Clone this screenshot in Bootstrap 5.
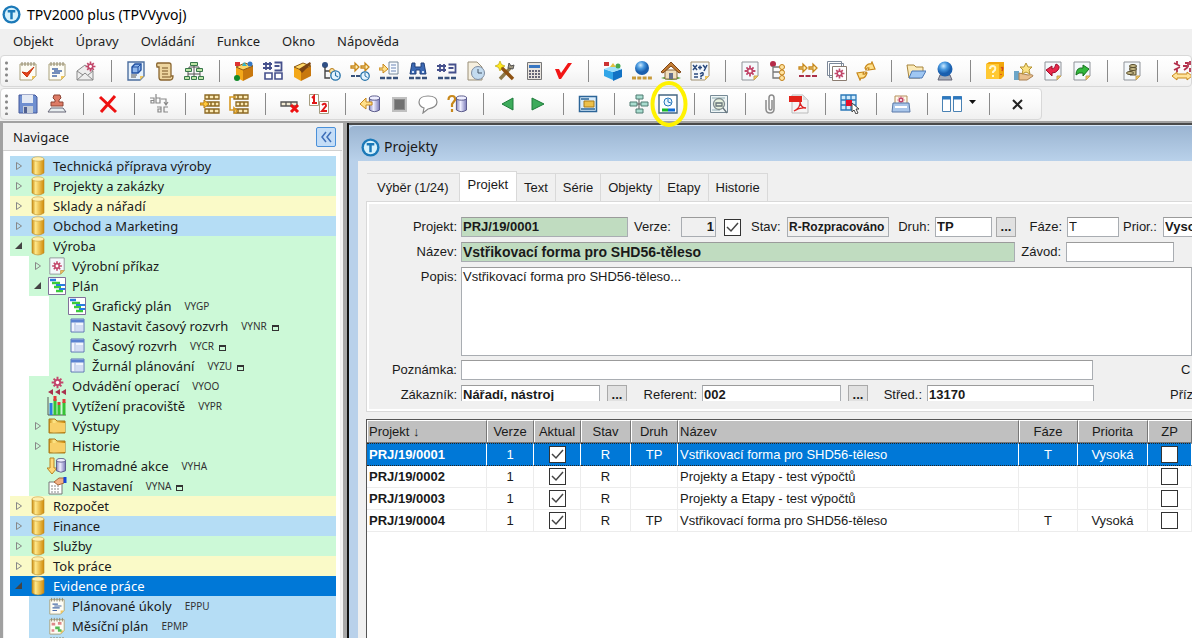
<!DOCTYPE html>
<html lang="cs">
<head>
<meta charset="utf-8">
<meta name="viewport" content="width=device-width, initial-scale=1">
<title>TPV2000 plus (TPVVyvoj)</title>
<link href="https://cdn.jsdelivr.net/npm/bootstrap@5.3.0/dist/css/bootstrap.min.css" rel="stylesheet">
<script src="https://cdn.jsdelivr.net/npm/bootstrap@5.3.0/dist/js/bootstrap.bundle.min.js"></script>
<style>
  body { font-family: "Noto Sans", "DejaVu Sans Condensed", sans-serif; font-size: 13px; line-height: 20px; color: #1a1a1a; background: #f0f0f0; }
  button, input, textarea { font: inherit; color: inherit; border-radius: 0; }
  svg { display: block; flex: none; }
  .app-title { height: 29px; padding-left: 2px; gap: 6px; font-size: 14px; line-height: 28px; color: #000; }
  .app-menu { height: 26px; padding-left: 13px; gap: 22px; line-height: 24px; }
  .app-menu a { color: #1e1e1e; text-decoration: none; }
  .tool-strip { height: 32px; border: 1px solid #d8d8d8; border-radius: 4px; background: linear-gradient(#fff, #fafafa 50%, #f0f0f0); margin-bottom: 1px; }
  .tool-strip button { width: 29px; height: 30px; padding: 0 0 0 4px; border: 0; background: none; flex: none; position: relative; }
  .tool-strip button.drop-tool { width: 40px; }
  .grip { width: 13px; height: 22px; flex: none; background: radial-gradient(circle, #888 1px, transparent 2px) 3px 0 / 5px 6px repeat-y; }
  .tool-sep { width: 21px; height: 22px; flex: none; background: linear-gradient(#8a8a8a, #8a8a8a) center / 1px 22px no-repeat; }
  .strip-low .tool-sep { width: 22px; }
  .marker { position: absolute; left: -5px; top: -9px; z-index: 5; pointer-events: none; }
  .dock { border-top: 2px solid #a2a2a2; }
  .nav-side { width: 349px; border-left: 3px solid #a0a0a0; border-right: 2px solid #111; background: #f0f0f0; flex: none; box-shadow: inset -4px 0 #a8a8a8, inset -6px 0 #f4f4f4; }
  .nav-head { height: 28px; padding-left: 10px; padding-right: 6px; margin-right: 5px; border-bottom: 1px solid #d0d0d0; }
  .nav-head button { width: 20px; height: 20px; padding: 0 3px; border: 1px solid #4a90d9; border-radius: 2px; background: #c4ddf7; }
  .tree { background: #fff; margin: 0 7px 0 1px; padding: 5px 4px 0 6px; }
  .tree li { height: 20px; white-space: nowrap; }
  .tree .lv1 { margin-left: 19px; } .tree .lv2 { margin-left: 39px; }
  .tree .twist { width: 18px; flex: none; display: flex; justify-content: center; }
  .tree .label { margin-left: 5px; }
  .tree small { margin-left: 13px; font-size: 10px; line-height: 20px; color: #333; }
  .tree .sq { width: 7px; height: 6px; border: 1px solid #333; border-top-width: 2px; margin: 4px 0 0 5px; }
  .c-b { background: #b5ddf5; } .c-g { background: #ccf9d7; } .c-y { background: #fafac8; }
  .c-s { background: #0078d7; color: #fff; }
  .doc { border-top: 2px solid #4a4a4a; padding-left: 9px; background: linear-gradient(#b9d1ea, #b9d1ea) 0 0 / 9px 100% no-repeat #f0f0f0; font-family: "Liberation Sans", Arial, sans-serif; }
  .doc-title { height: 36px; margin-left: -9px; padding: 7px 0 0 12px; background: linear-gradient(#9ab4d1, #b9d1ea); border-top: 1px solid #d8e8f8; border-top-left-radius: 5px; font-family: "Noto Sans", sans-serif; font-size: 14px; }
  .doc-tabs { margin: 10px 0 0 9px; height: 30px; align-items: flex-end; }
  .doc-tabs button { height: 28px; border: 1px solid #d9d9d9; border-left: 0; border-bottom: 0; background: #f0f0f0; padding: 0 7px; white-space: nowrap; flex: none; }
  .doc-tabs button:first-child { padding: 0 10px; }
  .doc-tabs button.active { height: 30px; background: #fff; padding: 0 8px 4px; }
  .pane { margin-left: 8px; height: 211px; padding: 11px 0 6px 2px; border: solid #d9d9d9; border-width: 1px 0 1px 1px; box-shadow: inset 2px 2px #fff, inset 0 -2px #fff; }
  .frow { height: 20px; margin-bottom: 5px; white-space: nowrap; }
  .frow > * { flex: none; }
  .first-lb { width: 88px; text-align: right; margin-right: 4px; }
  .pane input[type=text], .pane textarea { height: 20px; border: 1px solid #a9adb2; border-top-color: #9b9b9b; background: #fff; padding: 0 1px; font-weight: 700; outline: 0; }
  .pane input.grn { background: #c0dcc0; }
  .pane input.gry { background: #f0f0f0; }
  .frow button { width: 20px; height: 20px; border: 1px solid #a9a9a9; background: #e1e1e1; padding: 0; line-height: 18px; font-weight: 700; }
  .pane textarea.memo { height: 89px; font-weight: 400; line-height: 18px; resize: none; }
  .cut { height: 16px; overflow: hidden; }
  .tick { appearance: none; width: 17px; height: 17px; border: 1px solid #333; background: #fff; margin: 0; display: block; }
  .tick:checked { background: #fff url("data:image/svg+xml,%3Csvg xmlns='http://www.w3.org/2000/svg' viewBox='0 0 15 15'%3E%3Cpath d='M2 7l4 4 7-8' fill='none' stroke='%23444' stroke-width='1.5'/%3E%3C/svg%3E"); }
  .w-a { width: 167px; } .w-b { width: 35px; } .w-d { width: 57px; } .w-e { width: 52px; }
  .w-h { width: 108px; } .w-i { width: 632px; } .w-j { width: 139px; }
  .pane input.w-c { width: 102px; font-size: 12px; }
  .pane input.w-g { width: 554px; font-size: 14px; }
  .lb-b { width: 53px; padding-left: 6px; } .lb-c { width: 38px; padding-left: 2px; } .lb-d { width: 46px; text-align: right; padding-right: 5px; }
  .lb-e { width: 51px; text-align: right; padding-right: 5px; } .lb-f { width: 44px; padding-left: 4px; } .lb-g { width: 68px; text-align: right; padding-right: 5px; } .lb-h { width: 52px; text-align: right; padding-right: 5px; }
  .lb-x { margin-left: 88px; } .lb-y { margin-left: 76px; } .mx-6 { margin: 0 7px; }
  .grid-box { margin: 7px 0 0 8px; background: #fff; border: 1px solid #555; border-width: 1px 0 0 1px; }
  .grid-box table { width: 100%; table-layout: fixed; border-collapse: separate; border-spacing: 0; line-height: 20px; }
  .grid-box th { height: 23px; padding: 0 2px; background: #c0c0c0; font-weight: 400; text-align: center; border-right: 1px solid #777; border-bottom: 1px solid #777; border-top: 1px solid #fff; box-shadow: inset 1px 0 #fff; }
  .grid-box td { height: 22px; padding: 0 1px; border-right: 1px solid #ececec; border-bottom: 1px solid #ececec; text-align: center; white-space: nowrap; }
  .grid-box .tick { margin: 0 auto; }
  .grid-box .tl { text-align: left; padding-left: 2px; }
  .grid-box tbody .tl:first-child { font-weight: 700; }
  .grid-box .sel td { height: 23px; background: #0078d7; color: #fff; border-bottom: 1px dotted #222; border-top: 1px dotted #222; border-right-color: #fff; }
  .k-a { width: 120px; } .k-b { width: 47px; } .k-c { width: 50px; } .k-d { width: 59px; } .k-e { width: 70px; } .k-f { width: 44px; }
</style>
</head>
<body class="vh-100 overflow-hidden d-flex flex-column">

<svg width="0" height="0" class="position-absolute" aria-hidden="true">
  <defs>
    <linearGradient id="gold"><stop offset="0" stop-color="#c98a10"/><stop offset=".3" stop-color="#ffe88a"/><stop offset="1" stop-color="#d18b08"/></linearGradient>
    <linearGradient id="ice"><stop offset="0" stop-color="#8c8cc0"/><stop offset=".4" stop-color="#eef"/><stop offset="1" stop-color="#7a7ab8"/></linearGradient>
    <radialGradient id="ball" cx=".4" cy=".3"><stop offset="0" stop-color="#cdeaff"/><stop offset=".5" stop-color="#4a9ae0"/><stop offset="1" stop-color="#1a5fae"/></radialGradient>
  </defs>
  <symbol id="logo" viewBox="0 0 20 20"><circle cx="10" cy="10" r="9.500" fill="#1b79b8"/><circle cx="10" cy="10" r="7" fill="#d6f1fc"/><path d="M6 6.500h8M10 6.500V15" stroke="#1b79b8" stroke-width="2.600"/></symbol>
  <symbol id="note" viewBox="0 0 20 20"><path d="M2 3h16v12l-4 4H2z" fill="#fdfcf4" stroke="#a9a07a"/><path d="M14 19v-4h4z" fill="#f0c75e"/><path d="M4 1v4M7 1v4M10 1v4M13 1v4M16 1v4" stroke="#8d8466"/></symbol>
  <symbol id="notecheck" viewBox="0 0 20 20"><use href="#note"/><path d="M4 11l5 5 7-10-7 6z" fill="#e8451c" stroke="#c8330c"/></symbol>
  <symbol id="notelines" viewBox="0 0 20 20"><use href="#note"/><path d="M5 8h6M7 10h8M5 12h8M5 15h5" stroke="#476aa8" stroke-width="1.300"/></symbol>
  <symbol id="mail" viewBox="0 0 20 20"><path d="M1 10l8-6 8 6v9H1z" fill="#eee" stroke="#888"/><path d="M1 19l8-7 8 7M1 10l6 4M17 10l-5 4" fill="none" stroke="#888"/><use href="#gear" x="9" y="0" width="11" height="11"/></symbol>
  <symbol id="gear" viewBox="0 0 20 20"><path d="M10 1v18M1 10h18M4 4l12 12M16 4L4 16" stroke="#c2476b" stroke-width="3"/><circle cx="10" cy="10" r="5.500" fill="#c2476b"/><circle cx="10" cy="10" r="2.600" fill="#fff"/></symbol>
  <symbol id="paper" viewBox="0 0 20 20"><path d="M2 1h16v14l-4 4H2z" fill="#f4f8fb" stroke="#8f9399"/><path d="M14 19v-4h4z" fill="#f0c75e" stroke="#c9a455"/></symbol>
  <symbol id="cubepage" viewBox="0 0 20 20"><path d="M2 1h16v14l-4 4H2z" fill="#e6f1fb" stroke="#4d6f9f" stroke-width="1.400"/><path d="M14 19v-4h4z" fill="#f0c75e"/><path d="M6 6l3-3h6v6l-3 3H6z" fill="#8fb7ec" stroke="#1f4ea0" stroke-width="1.400"/><path d="M6 6h6v6M12 6l3-3" fill="none" stroke="#1f4ea0"/><path d="M5 14h6M5 16h5" stroke="#555"/></symbol>
  <symbol id="scroll" viewBox="0 0 20 20"><path d="M3 2h11q2 0 2 2v11h2q0 4-3 4H6q-2 0-2-3V6H2Q1 2 3 2z" fill="#eed6a0" stroke="#8a6630" stroke-width="1.300"/><path d="M7 7h6M7 10h6M7 13h6M7 16h9" stroke="#785525"/></symbol>
  <symbol id="org" viewBox="0 0 20 20"><path d="M10 4v12M5 8v-2h10v2M4 10v6M16 10v6M4 13h12" fill="none" stroke="#555"/><g fill="#bde5a6" stroke="#37764a"><path d="M6.500 1.500h7v3h-7zM1.500 7.500h6v3h-6zM12.500 7.500h6v3h-6zM.5 15.500h5v3h-5zM7.500 15.500h5v3h-5zM14.500 15.500h5v3h-5z"/></g></symbol>
  <symbol id="box" viewBox="0 0 20 20"><path d="M2 6l7 3v11l-7-4z" fill="#f3a81a"/><path d="M9 9l10-4v10L9 20z" fill="#c8780e"/><path d="M2 6l9-4 8 3-10 4z" fill="#ffd766" stroke="#8b5711"/></symbol>
  <symbol id="boxparts" viewBox="0 0 20 20"><use href="#box"/><path d="M1 1h5v4H1z" fill="#d33"/><path d="M8 5l2-4 3 4z" fill="#39b5c5"/><circle cx="16" cy="3" r="2.500" fill="#3578c4"/><circle cx="3" cy="17" r="3" fill="#128a28"/></symbol>
  <symbol id="boxpen" viewBox="0 0 20 20"><use href="#box"/><path d="M7 8l11-7 1 2-9 9z" fill="#7b4311"/></symbol>
  <symbol id="bluebox" viewBox="0 0 20 20"><path d="M1 8l9 3v8l-9-4z" fill="#32a6e8"/><path d="M10 11l9-3v8l-9 4z" fill="#1272c4"/><path d="M1 8l8-3 10 3-9 3z" fill="#9de0fb"/><path d="M1 1h5v4H1z" fill="#c33"/><path d="M7 6l3-4 3 4z" fill="#e0c040"/><circle cx="15" cy="5" r="2.500" fill="#46a94f"/></symbol>
  <symbol id="hash" viewBox="0 0 20 20"><path d="M3 1v8M7 1v8M0 3h9M0 7h9" stroke="#45508c" stroke-width="1.800"/><path d="M11.500 1.500h7v8h-7M11.500 5h5" fill="none" stroke="#45508c" stroke-width="1.800"/></symbol>
  <symbol id="hashboxes" viewBox="0 0 20 20"><use href="#hash"/><path d="M2 12h7v6H2zM12 12h7v6h-7z" fill="#fff" stroke="#45508c" stroke-width="1.600"/></symbol>
  <symbol id="hashdash" viewBox="0 0 20 20"><use href="#hash" y="2"/><use href="#dashes"/></symbol>
  <symbol id="dashes" viewBox="0 0 20 20"><path d="M1 17h18" stroke="#38527c" stroke-width="2.400" stroke-dasharray="5 1.500"/></symbol>
  <symbol id="clock" viewBox="0 0 20 20"><circle cx="10" cy="10" r="8.500" fill="#e4f3fd" stroke="#2672a8" stroke-width="2.500"/><path d="M10 4v6l5 3" fill="none" stroke="#2672a8" stroke-width="2"/></symbol>
  <symbol id="treeclock" viewBox="0 0 20 20"><circle cx="4" cy="4" r="3" fill="#2f4f84"/><path d="M4 6v11h5M4 10h5" fill="none" stroke="#444" stroke-width="1.400"/><circle cx="11" cy="10" r="2.500" fill="#fbe2a4" stroke="#b87d18"/><use href="#clock" x="9" y="9" width="11" height="11"/></symbol>
  <symbol id="arrows" viewBox="0 0 20 20"><path d="M1 5h4V2l4 4-4 4V7H1zM11 5h4V2l4 4-4 4V7h-4z" fill="#fff0b8" stroke="#c8881c" stroke-width="1.300"/></symbol>
  <symbol id="arrowsclock" viewBox="0 0 20 20"><use href="#arrows"/><path d="M1 15h9" stroke="#38527c" stroke-width="2" stroke-dasharray="4 1"/><use href="#clock" x="10" y="10" width="10" height="10"/></symbol>
  <symbol id="arrowpage" viewBox="0 0 20 20"><path d="M10 1h9v12h-9z" fill="#f7fbff" stroke="#789"/><path d="M12 4h5M12 7h5M12 10h5" stroke="#6a85b5"/><path d="M0 7h4V3l5 5-5 4V9H0z" fill="#ffe08a" stroke="#c8881c"/><use href="#dashes"/></symbol>
  <symbol id="bino" viewBox="0 0 20 20"><path d="M4 2h3v4h6V2h3l2 11h-6v-4H8v4H2z" fill="#3b69b3" stroke="#22417a"/><path d="M4 11h2M14 11h2" stroke="#cfe0f8" stroke-width="2"/><use href="#dashes"/></symbol>
  <symbol id="pageclock" viewBox="0 0 20 20"><path d="M2 1h9l5 5v13H2z" fill="#f5efdf" stroke="#9a8f78"/><circle cx="12" cy="12" r="6.500" fill="#c3dbef" stroke="#7c8ba0"/><path d="M12 8v4h4" fill="none" stroke="#456"/></symbol>
  <symbol id="tools" viewBox="0 0 20 20"><path d="M5 18L17 5" stroke="#8d7a4c" stroke-width="3.400"/><path d="M6 6l12 12" stroke="#8e5212" stroke-width="3.400"/><path d="M14 2l-1 5 5 1 1-4-3 1z" fill="#a39b85" stroke="#555"/><path d="M5 0l1.500 3.500L10 5 6.500 6.500 5 10 3.500 6.500 0 5l3.500-1.500z" fill="#ffe81e" stroke="#b09800" stroke-width=".6"/></symbol>
  <symbol id="calc" viewBox="0 0 20 20"><path d="M3.500 1.500h14v17h-14z" fill="#e8e4de" stroke="#777"/><path d="M5 4h11v3H5z" fill="#3876c2"/><path d="M5 10h11M5 13h11M5 16h11" stroke="#667" stroke-width="2" stroke-dasharray="2 1"/></symbol>
  <symbol id="redcheck" viewBox="0 0 20 20"><path d="M2 8h4l2 4L15 2h4L8 18H6z" fill="#f21616"/></symbol>
  <symbol id="globe" viewBox="0 0 20 20"><circle cx="10" cy="7" r="7" fill="url(#ball)"/><path d="M0 17h20" stroke="#c79a3a" stroke-width="3" stroke-dasharray="4 1.300"/></symbol>
  <symbol id="home" viewBox="0 0 20 20"><path d="M0 17q10-4 20 0-9 4-20 0" fill="#5da63c"/><path d="M4 9h12v9H4z" fill="#f0dfbd" stroke="#8b6b3c"/><path d="M0 11L10 1l10 10-2 1-8-7-8 7z" fill="#c27c34" stroke="#7d4515"/><path d="M8 12h4v6H8z" fill="#66708b"/></symbol>
  <symbol id="formula" viewBox="0 0 20 20"><path d="M1 1h18v14l-4 4H1z" fill="#f4f8fb" stroke="#a09070"/><path d="M15 19v-4h4z" fill="#f0c75e"/><path d="M3 4l4 5M7 4L3 9M8 6.500h4M10 4.500v4M13 4l2 2.500M17 4l-3 6M4 13h4M4 16h4M10 13q4-3 3 1l-2 1v1M11 16.500v1.500" fill="none" stroke="#2b4a7d" stroke-width="1.500"/></symbol>
  <symbol id="gearpage" viewBox="0 0 20 20"><use href="#paper"/><use href="#gear" x="4" y="4" width="12" height="12"/></symbol>
  <symbol id="treered" viewBox="0 0 20 20"><circle cx="4" cy="3" r="3" fill="#b52a48"/><path d="M4 5v12h7M4 11h7M4 6h8" fill="none" stroke="#777" stroke-width="1.300"/><g fill="#ffe3a0" stroke="#c17f18"><circle cx="13" cy="6" r="2.500"/><circle cx="13" cy="11.500" r="2.500"/><circle cx="13" cy="17" r="2.500"/></g></symbol>
  <symbol id="arrowsred" viewBox="0 0 20 20"><use href="#arrows" y="1"/><path d="M1 15h18" stroke="#aa2e48" stroke-width="2.200" stroke-dasharray="5 1.500"/></symbol>
  <symbol id="pages" viewBox="0 0 20 20"><path d="M.5.500h14v14H.5zM2.500 2.500h14v14h-14z" fill="#fff" stroke="#7c8898"/><path d="M5.500 5.500h14v14h-14z" fill="#fff" stroke="#8b7c70"/><use href="#gear" x="7" y="7" width="11" height="11"/></symbol>
  <symbol id="swap" viewBox="0 0 20 20"><path d="M9 7q2-5 6-4l1-2 3 7-7 1 1-2q-2-1-3 2zM11 12q-2 6-6 5l-1 2-3-7 7-1-1 2q2 1 3-2z" fill="#ffe08a" stroke="#c8881c" stroke-width="1.200"/></symbol>
  <symbol id="openfolder" viewBox="0 0 20 20"><path d="M1 4h7l2 2h7v4L14 17H3z" fill="#fbeab8" stroke="#a8853c"/><path d="M6 10h14l-4 7H3z" fill="#9fc7f3" stroke="#4b77b4"/></symbol>
  <symbol id="crystal" viewBox="0 0 20 20"><path d="M5 14h10l2 5H3z" fill="#a6acb8" stroke="#667"/><circle cx="10" cy="8" r="7.500" fill="url(#ball)"/></symbol>
  <symbol id="quest" viewBox="0 0 20 20"><path d="M1 3l3-2h15v14l-3 3H1z" fill="#f2a70c"/><path d="M1 3h13v15H1z" fill="#ffc933"/><path d="M5 8q0-3 3-3t2 4l-2 2v1M8 14v2" fill="none" stroke="#fff7d0" stroke-width="2"/><path d="M16 7q3-2 1 3M16 13v1" fill="none" stroke="#d04a20" stroke-width="1.500"/></symbol>
  <symbol id="handstar" viewBox="0 0 20 20"><path d="M0 10h5v9H0z" fill="#6ca5c8"/><path d="M5 12l9 2q5-1 5 1l-6 4H5z" fill="#e9c08e" stroke="#a98052"/><path d="M12 2l2 4h4l-3 3 1 4-4-2-4 2 1-4-3-3h4z" fill="#fbe285" stroke="#b59330"/></symbol>
  <symbol id="pgred" viewBox="0 0 20 20"><use href="#paper"/><path d="M3 9l6-4v3q3 0 4-5 5 2 2 6-2 3-6 3v3z" fill="#e8284b" stroke="#a00d2b"/></symbol>
  <symbol id="pggreen" viewBox="0 0 20 20"><use href="#paper"/><path d="M17 8l-6-4v3q-7-1-7 7l3-2h4v3z" fill="#32b83c" stroke="#14701c"/></symbol>
  <symbol id="coins" viewBox="0 0 20 20"><use href="#paper"/><g fill="#c9bc8a" stroke="#554b2b"><path d="M8 5h6v9H8z"/><ellipse cx="11" cy="5" rx="3.500" ry="1.500"/><ellipse cx="11" cy="8" rx="3.500" ry="1.500"/><ellipse cx="8" cy="12" rx="3.500" ry="1.500"/></g></symbol>
  <symbol id="gearswap" viewBox="0 0 20 20"><path d="M2 2l6 3M2 9l6-3M5 0v4M5 7v4M13 2h3v4M12 9l4-3M18 0v4M18 7v4M11 5h4" stroke="#b3304c" stroke-width="1.800" fill="none"/><path d="M0 15l5-4v2h10v-2l5 4-5 4v-2H5v2z" fill="#ffe39a" stroke="#c8881c"/></symbol>
  <symbol id="floppy" viewBox="0 0 20 20"><path d="M1 1h16l2 2v16H1z" fill="#6f8fd0" stroke="#44589a"/><path d="M4 1h11v8H4z" fill="#e4eaf4"/><path d="M5 12h10v7H5z" fill="#c4ccd8"/><path d="M6 13h3v6H6z" fill="#506090"/></symbol>
  <symbol id="stamp" viewBox="0 0 20 20"><path d="M7 1h6l1 3-2 2v2h4v4H4V8h4V6L6 4z" fill="#dd7b66" stroke="#8e4434"/><path d="M4 14h12l3 4H1z" fill="#e8eef0" stroke="#667"/></symbol>
  <symbol id="redx" viewBox="0 0 20 20"><path d="M2 3l16 15M17 2L3 18" stroke="#e11" stroke-width="3"/></symbol>
  <symbol id="replace" viewBox="0 0 20 20"><path d="M1 4h4v5H2V6.500h3M7 0v9h4V4H7M12 5h5v5M15 8l2 3 2-3M8 13h4v5H9v-3h3M19 13h-4v5h4" fill="none" stroke="#888" stroke-width="1.200"/></symbol>
  <symbol id="rows" viewBox="0 0 20 20"><path d="M5 1h14v4H5zM7 8h12v4H7zM5 15h14v4H5z" fill="#fbe9b4" stroke="#8c6823" stroke-width="1.300"/><path d="M9 1v4M14 1v4M11 8v4M15 8v4M9 15v4M14 15v4" stroke="#8c6823" stroke-width="1.500"/></symbol>
  <symbol id="rowins" viewBox="0 0 20 20"><use href="#rows"/><path d="M0 9h4V6l5 4-5 4v-3H0z" fill="#ffc93c" stroke="#b87b0c"/></symbol>
  <symbol id="rowcopy" viewBox="0 0 20 20"><use href="#rows"/><path d="M7 3H1v13h4v-2l3 3-3 3" fill="none" stroke="#d89a22" stroke-width="1.600"/></symbol>
  <symbol id="rowdel" viewBox="0 0 20 20"><path d="M1 8h16v4H1zM6 8v4M11 8v4" fill="#f2ead2" stroke="#555" stroke-width="1.300"/><path d="M11 11l7 7M18 11l-7 7" stroke="#e11" stroke-width="3"/></symbol>
  <symbol id="onetwo" viewBox="0 0 20 20"><path d="M.5.500h9v11h-9zM10.500 7.500h9v12h-9z" fill="#fff" stroke="#a69d80"/><path d="M3 4l2-2v7M3 9h5M13 11q4-3 4 1l-4 5h5" fill="none" stroke="#e01818" stroke-width="2"/></symbol>
  <symbol id="cyl" viewBox="0 0 20 20"><path d="M4 3v14q6 4 12 0V3z" fill="url(#ice)" stroke="#44447a"/><ellipse cx="10" cy="3" rx="6" ry="2.500" fill="#eef" stroke="#44447a"/></symbol>
  <symbol id="dbin" viewBox="0 0 20 20"><use href="#cyl" x="6" y="1" width="17" height="18"/><path d="M12 8H6V4L0 10l6 5v-4h6z" fill="#ffe08a" stroke="#c8881c"/></symbol>
  <symbol id="stop" viewBox="0 0 20 20"><path d="M4 4h13v13H4z" fill="#8a8a8a" stroke="#c0c0c0" stroke-width="2"/><path d="M6 6h9v9H6z" fill="#707070"/></symbol>
  <symbol id="bubble" viewBox="0 0 20 20"><path d="M10 2c5 0 9 2 9 6s-4 6-9 7l-5 4 1-5C3 13 1 11 1 8c0-4 4-6 9-6z" fill="#fff" stroke="#888" stroke-width="1.200"/></symbol>
  <symbol id="dbq" viewBox="0 0 20 20"><use href="#cyl" x="6" y="1" width="17" height="18"/><path d="M1.500 6q0-4 3.500-4t3 4l-3 4v3M5 15v3" fill="none" stroke="#c8881c" stroke-width="2.200"/></symbol>
  <symbol id="prev" viewBox="0 0 20 20"><path d="M15 4v12L4 10z" fill="#3dab5b" stroke="#1d7c3a"/></symbol>
  <symbol id="next" viewBox="0 0 20 20"><path d="M5 4v12l12-6z" fill="#3dab5b" stroke="#1d7c3a"/></symbol>
  <symbol id="panel" viewBox="0 0 20 20"><path d="M1.500 2.500h17v15h-17z" fill="#d9ecfb" stroke="#2c6598" stroke-width="1.500"/><path d="M3 5h8M3 15h14" stroke="#2c6598" stroke-width="1.500"/><path d="M6 7h10v6H6z" fill="#ecc04a" stroke="#a97a18"/></symbol>
  <symbol id="flow" viewBox="0 0 20 20"><path d="M10 3v14M3 10h14" stroke="#555"/><g fill="#a9ddd0" stroke="#4f7b70"><path d="M7 1h7v4H7zM1 8h7v4H1zM12 8h7v4h-7zM7 15h7v4H7z"/></g></symbol>
  <symbol id="clockbar" viewBox="0 0 20 20"><path d="M1 1h18v18H1z" fill="#fff" stroke="#446583" stroke-width="1.400"/><circle cx="10" cy="8" r="4" fill="#eaf5ff" stroke="#2776bb"/><path d="M10 5v3l3 1" fill="none" stroke="#2776bb"/><path d="M4 16h6" stroke="#19b82a" stroke-width="3"/><path d="M10 16h7" stroke="#0c69d8" stroke-width="3"/></symbol>
  <symbol id="find" viewBox="0 0 20 20"><path d="M1.500 1.500h17v17h-17z" fill="#eef5f5" stroke="#778a96"/><path d="M3 4h13M3 16h8" stroke="#90aeb5"/><circle cx="10" cy="10" r="5.500" fill="#e6f1dd" stroke="#7f8b8e" stroke-width="1.300"/><path d="M7 9h6v3H7zM14 14l4 5" fill="none" stroke="#66737a" stroke-width="1.300"/></symbol>
  <symbol id="clip" viewBox="0 0 20 20"><path d="M6 6v9q0 4 4 4t4-4V4q0-3-2.500-3T9 4v10q0 2 1.500 2T12 14V6" fill="none" stroke="#8b8b8b" stroke-width="1.500"/></symbol>
  <symbol id="pdf" viewBox="0 0 20 20"><path d="M3 1h11l5 5v13H3z" fill="#f5f5f5" stroke="#bbb"/><path d="M14 1v5h5z" fill="#ddd"/><path d="M0 2h13v6H0z" fill="#e2231a"/><path d="M5 17q7-4 6-9 1 6 6 6-6-1-12 3z" fill="none" stroke="#d22" stroke-width="1.300"/></symbol>
  <symbol id="gridpick" viewBox="0 0 20 20"><path d="M1 1h15v15H1z" fill="#cfeafb"/><path d="M1 1h15v15H1zM6 1v15M11 1v15M1 6h15M1 11h15" fill="none" stroke="#2b78b8" stroke-width="1.300"/><path d="M6 6h6v6H6z" fill="#e8102a"/><path d="M12 9v9l2-2 2 4 2-1-2-4h3z" fill="#fff" stroke="#444"/></symbol>
  <symbol id="tray" viewBox="0 0 20 20"><path d="M4 2h12v8H4z" fill="#fff8e8" stroke="#b58f5b"/><use href="#gear" x="6" y="2" width="8" height="8"/><path d="M2 9h16l1 9H1z" fill="#a9c6ea" stroke="#5a79a8"/><path d="M4 13h12" stroke="#fff" stroke-width="2"/></symbol>
  <symbol id="cols" viewBox="0 0 34 20"><path d="M.5 2.500h8v15h-8zM11.500 2.500h8v15h-8z" fill="#fff" stroke="#4a82b4"/><path d="M0 4h9M11 4h9" stroke="#2d79c0" stroke-width="3"/><path d="M27 6h7l-3.500 4z" fill="#111"/></symbol>
  <symbol id="close" viewBox="0 0 20 20"><path d="M5 6l9 9M14 6l-9 9" stroke="#222" stroke-width="2"/></symbol>
  <symbol id="db" viewBox="0 0 20 20"><path d="M4 3v14q6 4 12 0V3z" fill="url(#gold)" stroke="#b98a2a" stroke-width=".6"/><ellipse cx="10" cy="3" rx="6" ry="2.200" fill="#fff0b0" stroke="#c9a040" stroke-width=".6"/></symbol>
  <symbol id="gantt" viewBox="0 0 20 20"><path d="M1.500 1.500h17v17h-17z" fill="#fff" stroke="#81709a"/><path d="M3 4h6" stroke="#2a7de0" stroke-width="2.500"/><path d="M5 7h8M7 11h7M9 15h7" stroke="#3acb3a" stroke-width="2.500"/><path d="M9 9h9M12 13h6" stroke="#2a7de0" stroke-width="1.800"/></symbol>
  <symbol id="form" viewBox="0 0 20 20"><path d="M4 3h13v13H4z" fill="#f2f5fd" stroke="#5c74b4"/><path d="M4 5h13" stroke="#5b82d0" stroke-width="3"/><path d="M8 6v10" stroke="#a6b6de"/><path d="M9 9h7v6H9z" fill="#d3ddf4"/></symbol>
  <symbol id="gearback" viewBox="0 0 20 20"><use href="#gear" x="4" y="0" width="13" height="13"/><path d="M1 16l5-3v6zM8 16l5-3v6zM14 16l5-3v6z" fill="#a8324e"/></symbol>
  <symbol id="bars" viewBox="0 0 20 20"><path d="M1 1v18h18" fill="none" stroke="#555"/><path d="M4 7v12" stroke="#2a7de0" stroke-width="3"/><path d="M8 3v16M12 9v10M17 6v13" stroke="#36c236" stroke-width="3"/><path d="M8 0v5M12 6v3M17 3v4" stroke="#e23b3b" stroke-width="3"/></symbol>
  <symbol id="folder" viewBox="0 0 20 16"><path d="M2 1h6l2 2h8v12H2z" fill="url(#gold)" stroke="#a8781c"/><path d="M3 5h15v9H3z" fill="#f8cf68"/></symbol>
  <symbol id="batch" viewBox="0 0 20 20"><path d="M3 2h4v10h3l-5 6-5-6h3z" fill="#ffd878" stroke="#b98322"/><use href="#cyl" x="6" y="2" width="16" height="15"/></symbol>
  <symbol id="props" viewBox="0 0 20 20"><path d="M2 6h13v12H2z" fill="#fff" stroke="#777"/><path d="M4 10h9M4 13h9M4 16h9" stroke="#888" stroke-dasharray="2 1"/><path d="M7 6l5-4h5v5l-6 2z" fill="#f2b183" stroke="#a9683c"/><path d="M18 1v6" stroke="#1648d8" stroke-width="3"/></symbol>
  <symbol id="month" viewBox="0 0 20 20"><use href="#note"/><path d="M4 8h4M11 7h4M4 15h3" stroke="#d88" stroke-width="3"/><path d="M8 12h5M11 15h4" stroke="#5b5" stroke-width="3"/></symbol>
  <symbol id="tclosed" viewBox="0 0 10 10"><path d="M2.500 1.500l5 3.500-5 3.500z" fill="none" stroke="#888"/></symbol>
  <symbol id="topen" viewBox="0 0 10 10"><path d="M8 1v7H1z" fill="#444"/></symbol>
</svg>

<header class="app-title bg-white d-flex align-items-center flex-shrink-0">
  <svg width="19" height="19"><use href="#logo"/></svg><span>TPV2000 plus (TPVVyvoj)</span>
</header>
<nav class="app-menu d-flex flex-shrink-0" aria-label="Menu">
  <a href="#">Objekt</a><a href="#">Úpravy</a><a href="#">Ovládání</a><a href="#">Funkce</a><a href="#">Okno</a><a href="#">Nápověda</a>
</nav>
<div class="tool-strip d-flex align-items-center flex-shrink-0 overflow-hidden me-n2" role="toolbar">
  <span class="grip"></span>
  <button aria-label="Úkoly"><svg width="20" height="20"><use href="#notecheck"/></svg></button>
  <button aria-label="Poznámky"><svg width="20" height="20"><use href="#notelines"/></svg></button>
  <button aria-label="Zpráva"><svg width="20" height="20"><use href="#mail"/></svg></button>
  <span class="tool-sep"></span>
  <button aria-label="Výkres"><svg width="20" height="20"><use href="#cubepage"/></svg></button>
  <button aria-label="Listina"><svg width="20" height="20"><use href="#scroll"/></svg></button>
  <button aria-label="Struktura"><svg width="20" height="20"><use href="#org"/></svg></button>
  <span class="tool-sep"></span>
  <button aria-label="Díly"><svg width="20" height="20"><use href="#boxparts"/></svg></button>
  <button aria-label="Čísla"><svg width="20" height="20"><use href="#hashboxes"/></svg></button>
  <button aria-label="Balení"><svg width="20" height="20"><use href="#boxpen"/></svg></button>
  <button aria-label="Časy stromu"><svg width="20" height="20"><use href="#treeclock"/></svg></button>
  <button aria-label="Operace"><svg width="20" height="20"><use href="#arrowsclock"/></svg></button>
  <button aria-label="Postup"><svg width="20" height="20"><use href="#arrowpage"/></svg></button>
  <button aria-label="Hledat"><svg width="20" height="20"><use href="#bino"/></svg></button>
  <button aria-label="Číslování"><svg width="20" height="20"><use href="#hashdash"/></svg></button>
  <button aria-label="Čas"><svg width="20" height="20"><use href="#pageclock"/></svg></button>
  <button aria-label="Nástroje"><svg width="20" height="20"><use href="#tools"/></svg></button>
  <button aria-label="Kalkulace"><svg width="20" height="20"><use href="#calc"/></svg></button>
  <button aria-label="Kontrola"><svg width="20" height="20"><use href="#redcheck"/></svg></button>
  <span class="tool-sep"></span>
  <button aria-label="Sestava"><svg width="20" height="20"><use href="#bluebox"/></svg></button>
  <button aria-label="Síť"><svg width="20" height="20"><use href="#globe"/></svg></button>
  <button aria-label="Domů"><svg width="20" height="20"><use href="#home"/></svg></button>
  <button aria-label="Vzorce"><svg width="20" height="20"><use href="#formula"/></svg></button>
  <span class="tool-sep"></span>
  <button aria-label="Výrobní příkaz"><svg width="20" height="20"><use href="#gearpage"/></svg></button>
  <button aria-label="Strom"><svg width="20" height="20"><use href="#treered"/></svg></button>
  <button aria-label="Kroky"><svg width="20" height="20"><use href="#arrowsred"/></svg></button>
  <button aria-label="Příkazy"><svg width="20" height="20"><use href="#pages"/></svg></button>
  <button aria-label="Obnovit"><svg width="20" height="20"><use href="#swap"/></svg></button>
  <span class="tool-sep"></span>
  <button aria-label="Otevřít"><svg width="20" height="20"><use href="#openfolder"/></svg></button>
  <button aria-label="Náhled"><svg width="20" height="20"><use href="#crystal"/></svg></button>
  <span class="tool-sep"></span>
  <button aria-label="Poptávka"><svg width="20" height="20"><use href="#quest"/></svg></button>
  <button aria-label="Nabídka"><svg width="20" height="20"><use href="#handstar"/></svg></button>
  <button aria-label="Příjem"><svg width="20" height="20"><use href="#pgred"/></svg></button>
  <button aria-label="Výdej"><svg width="20" height="20"><use href="#pggreen"/></svg></button>
  <span class="tool-sep"></span>
  <button aria-label="Finance"><svg width="20" height="20"><use href="#coins"/></svg></button>
  <span class="tool-sep"></span>
  <button aria-label="Přesun"><svg width="20" height="20"><use href="#gearswap"/></svg></button>
</div>
<div class="d-flex flex-shrink-0">
<div class="tool-strip strip-low d-flex align-items-center pe-2" role="toolbar">
  <span class="grip"></span>
  <button aria-label="Uložit"><svg width="20" height="20"><use href="#floppy"/></svg></button>
  <button aria-label="Razítko"><svg width="20" height="20"><use href="#stamp"/></svg></button>
  <span class="tool-sep"></span>
  <button aria-label="Smazat"><svg width="20" height="20"><use href="#redx"/></svg></button>
  <span class="tool-sep"></span>
  <button aria-label="Nahradit"><svg width="20" height="20"><use href="#replace"/></svg></button>
  <span class="tool-sep"></span>
  <button aria-label="Vložit řádek"><svg width="20" height="20"><use href="#rowins"/></svg></button>
  <button aria-label="Kopírovat řádek"><svg width="20" height="20"><use href="#rowcopy"/></svg></button>
  <span class="tool-sep"></span>
  <button aria-label="Smazat řádek"><svg width="20" height="20"><use href="#rowdel"/></svg></button>
  <button aria-label="Přečíslovat"><svg width="20" height="20"><use href="#onetwo"/></svg></button>
  <span class="tool-sep"></span>
  <button aria-label="Načíst"><svg width="20" height="20"><use href="#dbin"/></svg></button>
  <button aria-label="Zastavit"><svg width="20" height="20"><use href="#stop"/></svg></button>
  <button aria-label="Komentář"><svg width="20" height="20"><use href="#bubble"/></svg></button>
  <button aria-label="Dotaz"><svg width="20" height="20"><use href="#dbq"/></svg></button>
  <span class="tool-sep"></span>
  <button aria-label="Předchozí"><svg width="20" height="20"><use href="#prev"/></svg></button>
  <button aria-label="Další"><svg width="20" height="20"><use href="#next"/></svg></button>
  <span class="tool-sep"></span>
  <button aria-label="Formulář"><svg width="20" height="20"><use href="#panel"/></svg></button>
  <span class="tool-sep"></span>
  <button aria-label="Vazby"><svg width="20" height="20"><use href="#flow"/></svg></button>
  <button aria-label="Časový plán"><svg width="20" height="20"><use href="#clockbar"/></svg>
    <svg class="marker" width="40" height="48" viewBox="0 0 40 48"><ellipse cx="20" cy="24" rx="16.500" ry="21" fill="none" stroke="#fff200" stroke-width="4"/></svg></button>
  <span class="tool-sep"></span>
  <button aria-label="Prohlížet"><svg width="20" height="20"><use href="#find"/></svg></button>
  <span class="tool-sep"></span>
  <button aria-label="Příloha"><svg width="20" height="20"><use href="#clip"/></svg></button>
  <button aria-label="PDF"><svg width="20" height="20"><use href="#pdf"/></svg></button>
  <span class="tool-sep"></span>
  <button aria-label="Výběr buněk"><svg width="20" height="20"><use href="#gridpick"/></svg></button>
  <span class="tool-sep"></span>
  <button aria-label="Tisk"><svg width="20" height="20"><use href="#tray"/></svg></button>
  <span class="tool-sep"></span>
  <button class="drop-tool" aria-label="Sloupce"><svg width="34" height="20"><use href="#cols"/></svg></button>
  <span class="tool-sep"></span>
  <button class="ms-1" aria-label="Zavřít"><svg width="20" height="20"><use href="#close"/></svg></button>
</div>
</div>

<div class="dock d-flex flex-grow-1 overflow-hidden">
  <aside class="nav-side overflow-hidden">
    <div class="nav-head d-flex align-items-center justify-content-between">Navigace
      <button aria-label="Sbalit"><svg width="12" height="12" viewBox="0 0 12 12"><path d="M6 1L2 6l4 5M11 1L7 6l4 5" fill="none" stroke="#3f6fb8" stroke-width="1.500"/></svg></button>
    </div>
    <ul class="tree list-unstyled">
      <li class="c-b d-flex align-items-center"><span class="twist"><svg width="10" height="10"><use href="#tclosed"/></svg></span><svg width="20" height="20"><use href="#db"/></svg><span class="label">Technická příprava výroby</span></li>
      <li class="c-g d-flex align-items-center"><span class="twist"><svg width="10" height="10"><use href="#tclosed"/></svg></span><svg width="20" height="20"><use href="#db"/></svg><span class="label">Projekty a zakázky</span></li>
      <li class="c-y d-flex align-items-center"><span class="twist"><svg width="10" height="10"><use href="#tclosed"/></svg></span><svg width="20" height="20"><use href="#db"/></svg><span class="label">Sklady a nářadí</span></li>
      <li class="c-b d-flex align-items-center"><span class="twist"><svg width="10" height="10"><use href="#tclosed"/></svg></span><svg width="20" height="20"><use href="#db"/></svg><span class="label">Obchod a Marketing</span></li>
      <li class="c-g d-flex align-items-center"><span class="twist"><svg width="10" height="10"><use href="#topen"/></svg></span><svg width="20" height="20"><use href="#db"/></svg><span class="label">Výroba</span></li>
      <li class="c-g lv1 d-flex align-items-center"><span class="twist"><svg width="10" height="10"><use href="#tclosed"/></svg></span><svg width="20" height="18"><use href="#gearpage"/></svg><span class="label">Výrobní příkaz</span></li>
      <li class="c-g lv1 d-flex align-items-center"><span class="twist"><svg width="10" height="10"><use href="#topen"/></svg></span><svg width="20" height="20"><use href="#gantt"/></svg><span class="label">Plán</span></li>
      <li class="c-g lv2 d-flex align-items-center"><span class="twist"></span><svg width="20" height="20"><use href="#gantt"/></svg><span class="label">Grafický plán</span><small>VYGP</small></li>
      <li class="c-g lv2 d-flex align-items-center"><span class="twist"></span><svg width="20" height="20"><use href="#form"/></svg><span class="label">Nastavit časový rozvrh</span><small>VYNR</small><i class="sq"></i></li>
      <li class="c-g lv2 d-flex align-items-center"><span class="twist"></span><svg width="20" height="20"><use href="#form"/></svg><span class="label">Časový rozvrh</span><small>VYCR</small><i class="sq"></i></li>
      <li class="c-g lv2 d-flex align-items-center"><span class="twist"></span><svg width="20" height="20"><use href="#form"/></svg><span class="label">Žurnál plánování</span><small>VYZU</small><i class="sq"></i></li>
      <li class="c-g lv1 d-flex align-items-center"><span class="twist"></span><svg width="20" height="20"><use href="#gearback"/></svg><span class="label">Odvádění operací</span><small>VYOO</small></li>
      <li class="c-g lv1 d-flex align-items-center"><span class="twist"></span><svg width="20" height="20"><use href="#bars"/></svg><span class="label">Vytížení pracoviště</span><small>VYPR</small></li>
      <li class="c-g lv1 d-flex align-items-center"><span class="twist"><svg width="10" height="10"><use href="#tclosed"/></svg></span><svg width="20" height="16"><use href="#folder"/></svg><span class="label">Výstupy</span></li>
      <li class="c-g lv1 d-flex align-items-center"><span class="twist"><svg width="10" height="10"><use href="#tclosed"/></svg></span><svg width="20" height="16"><use href="#folder"/></svg><span class="label">Historie</span></li>
      <li class="c-g lv1 d-flex align-items-center"><span class="twist"></span><svg width="20" height="20"><use href="#batch"/></svg><span class="label">Hromadné akce</span><small>VYHA</small></li>
      <li class="c-g lv1 d-flex align-items-center"><span class="twist"></span><svg width="20" height="20"><use href="#props"/></svg><span class="label">Nastavení</span><small>VYNA</small><i class="sq"></i></li>
      <li class="c-y d-flex align-items-center"><span class="twist"><svg width="10" height="10"><use href="#tclosed"/></svg></span><svg width="20" height="20"><use href="#db"/></svg><span class="label">Rozpočet</span></li>
      <li class="c-b d-flex align-items-center"><span class="twist"><svg width="10" height="10"><use href="#tclosed"/></svg></span><svg width="20" height="20"><use href="#db"/></svg><span class="label">Finance</span></li>
      <li class="c-g d-flex align-items-center"><span class="twist"><svg width="10" height="10"><use href="#tclosed"/></svg></span><svg width="20" height="20"><use href="#db"/></svg><span class="label">Služby</span></li>
      <li class="c-y d-flex align-items-center"><span class="twist"><svg width="10" height="10"><use href="#tclosed"/></svg></span><svg width="20" height="20"><use href="#db"/></svg><span class="label">Tok práce</span></li>
      <li class="c-s d-flex align-items-center"><span class="twist"><svg width="10" height="10"><use href="#topen"/></svg></span><svg width="20" height="20"><use href="#db"/></svg><span class="label">Evidence práce</span></li>
      <li class="c-b lv1 d-flex align-items-center"><span class="twist"></span><svg width="20" height="18"><use href="#notelines"/></svg><span class="label">Plánované úkoly</span><small>EPPU</small></li>
      <li class="c-b lv1 d-flex align-items-center"><span class="twist"></span><svg width="20" height="18"><use href="#month"/></svg><span class="label">Měsíční plán</span><small>EPMP</small></li>
      <li class="c-b lv1 d-flex align-items-center"><span class="twist"></span><svg width="20" height="20"><use href="#note"/></svg></li>
    </ul>
  </aside>

  <main class="doc flex-grow-1 overflow-hidden d-flex flex-column">
    <div class="doc-title d-flex align-items-center flex-shrink-0"><svg width="19" height="19" class="me-1"><use href="#logo"/></svg>Projekty</div>
    <div class="doc-tabs d-flex flex-shrink-0" role="tablist">
      <button role="tab">Výběr (1/24)</button><button role="tab" class="active" aria-selected="true">Projekt</button><button role="tab">Text</button><button role="tab">Série</button><button role="tab">Objekty</button><button role="tab">Etapy</button><button role="tab">Historie</button>
    </div>
    <form class="pane flex-shrink-0 overflow-hidden">
      <div class="frow d-flex align-items-center mt-1">
        <label class="first-lb" for="f1">Projekt:</label><input type="text" class="grn w-a" id="f1" value="PRJ/19/0001">
        <label class="lb-b" for="f2">Verze:</label><input type="text" class="gry w-b text-end" id="f2" value="1">
        <input type="checkbox" class="tick mx-2" checked aria-label="Aktuální">
        <label class="lb-c" for="f3">Stav:</label><input type="text" class="gry w-c" id="f3" value="R-Rozpracováno">
        <label class="lb-d" for="f4">Druh:</label><input type="text" class="w-d" id="f4" value="TP">
        <button type="button" class="ms-1" aria-label="Vybrat druh">...</button>
        <label class="lb-e" for="f5">Fáze:</label><input type="text" class="w-e fw-normal" id="f5" value="T">
        <label class="lb-f" for="f6">Prior.:</label><input type="text" class="w-d" id="f6" value="Vysoká">
      </div>
      <div class="frow d-flex align-items-center">
        <label class="first-lb" for="f7">Název:</label><input type="text" class="grn w-g" id="f7" value="Vstřikovací forma pro SHD56-těleso">
        <label class="lb-e" for="f8">Závod:</label><input type="text" class="w-h" id="f8">
      </div>
      <div class="d-flex mb-1">
        <label class="first-lb flex-shrink-0" for="f9">Popis:</label><textarea class="memo flex-grow-1" id="f9">Vstřikovací forma pro SHD56-těleso...</textarea>
      </div>
      <div class="frow d-flex align-items-center">
        <label class="first-lb" for="f10">Poznámka:</label><input type="text" class="w-i" id="f10">
        <span class="lb-x">C</span>
      </div>
      <div class="frow cut d-flex">
        <label class="first-lb" for="f11">Zákazník:</label><input type="text" class="w-j" id="f11" value="Nářadí, nástroj">
        <button type="button" class="mx-6" aria-label="Vybrat zákazníka">...</button>
        <label class="lb-g" for="f12">Referent:</label><input type="text" class="w-j" id="f12" value="002">
        <button type="button" class="mx-6" aria-label="Vybrat referenta">...</button>
        <label class="lb-h" for="f13">Střed.:</label><input type="text" class="w-a" id="f13" value="13170">
        <span class="lb-y">Příz</span>
      </div>
    </form>
    <div class="grid-box flex-grow-1">
      <table>
        <colgroup><col class="k-a"><col class="k-b"><col class="k-b"><col class="k-c"><col class="k-b"><col><col class="k-d"><col class="k-e"><col class="k-f"></colgroup>
        <thead><tr><th class="tl">Projekt ↓</th><th>Verze</th><th>Aktual</th><th>Stav</th><th>Druh</th><th class="tl">Název</th><th>Fáze</th><th>Priorita</th><th>ZP</th></tr></thead>
        <tbody>
          <tr class="sel"><td class="tl">PRJ/19/0001</td><td>1</td><td><input type="checkbox" class="tick" checked aria-label="Aktual 1"></td><td>R</td><td>TP</td><td class="tl">Vstřikovací forma pro SHD56-těleso</td><td>T</td><td>Vysoká</td><td><input type="checkbox" class="tick" aria-label="ZP 1"></td></tr>
          <tr><td class="tl">PRJ/19/0002</td><td>1</td><td><input type="checkbox" class="tick" checked aria-label="Aktual 2"></td><td>R</td><td></td><td class="tl">Projekty a Etapy - test výpočtů</td><td></td><td></td><td><input type="checkbox" class="tick" aria-label="ZP 2"></td></tr>
          <tr><td class="tl">PRJ/19/0003</td><td>1</td><td><input type="checkbox" class="tick" checked aria-label="Aktual 3"></td><td>R</td><td></td><td class="tl">Projekty a Etapy - test výpočtů</td><td></td><td></td><td><input type="checkbox" class="tick" aria-label="ZP 3"></td></tr>
          <tr><td class="tl">PRJ/19/0004</td><td>1</td><td><input type="checkbox" class="tick" checked aria-label="Aktual 4"></td><td>R</td><td>TP</td><td class="tl">Vstřikovací forma pro SHD56-těleso</td><td>T</td><td>Vysoká</td><td><input type="checkbox" class="tick" aria-label="ZP 4"></td></tr>
        </tbody>
      </table>
    </div>
  </main>
</div>
</body>
</html>
